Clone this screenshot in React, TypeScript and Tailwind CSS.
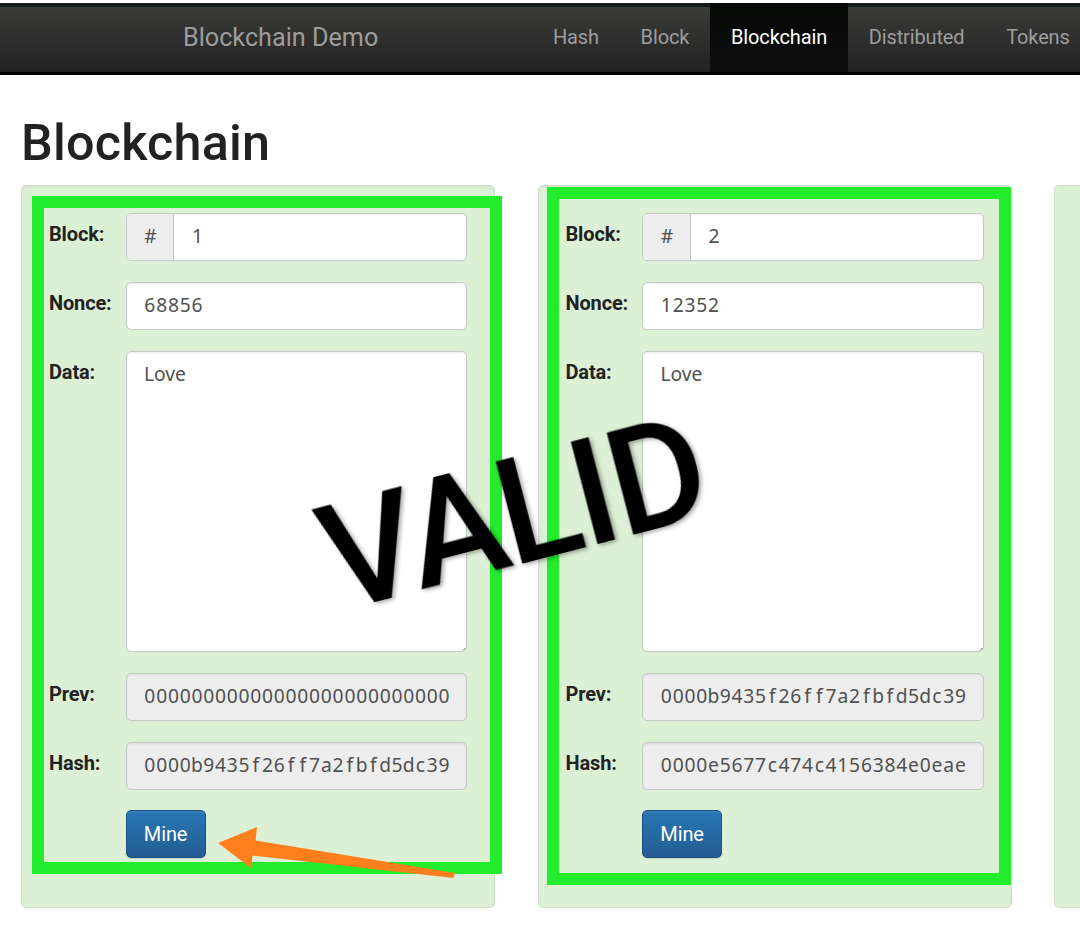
import { clsx } from 'clsx';

type BlockData = {
  number: string;
  nonce: string;
  data: string;
  prev: string;
  hash: string;
};

const navItems = ['Hash', 'Block', 'Blockchain', 'Distributed', 'Tokens'];

const blocks: BlockData[] = [
  {
    number: '1',
    nonce: '68856',
    data: 'Love',
    prev: '00000000000000000000000000',
    hash: '0000b9435f26ff7a2fbfd5dc39',
  },
  {
    number: '2',
    nonce: '12352',
    data: 'Love',
    prev: '0000b9435f26ff7a2fbfd5dc39',
    hash: '0000e5677c474c4156384e0eae',
  },
];

// Fixed pitch digits, one cell per character
function Mono({ text }: { text: string }) {
  return (
    <span className="flex overflow-hidden whitespace-nowrap">
      {text.split('').map((char, i) => (
        <span key={i} className="w-[11.77px] shrink-0 text-center">
          {char}
        </span>
      ))}
    </span>
  );
}

function Row({ label, children }: { label: string; children: React.ReactNode }) {
  return (
    <div className="flex">
      <div className="w-[76.6px] shrink-0 pt-[8px] text-[20px] leading-[27px] font-bold tracking-[-0.15px] text-[#222]">
        {label}
      </div>
      {children}
    </div>
  );
}

function Field({ text, disabled }: { text: string; disabled?: boolean }) {
  return (
    <div
      className={clsx(
        'flex h-12 min-w-0 flex-1 items-center overflow-hidden rounded-[5px] border border-[#c5cbc4] pr-[16px] pb-[2px] pl-[17.4px] font-["Noto_Sans",sans-serif] text-[19.25px] text-[#505050] shadow-[inset_0_1px_2px_rgba(0,0,0,0.08)]',
        disabled ? 'bg-[#ededed]' : 'bg-white'
      )}
    >
      <Mono text={text} />
    </div>
  );
}

function BlockCard({ block }: { block: BlockData }) {
  return (
    <div className="flex h-[723px] w-[474px] shrink-0 flex-col gap-[21px] rounded-[5px] border border-[#cfe0ca] bg-[#dcf0d6] px-[27px] pt-[27px] shadow-[inset_0_1px_3px_rgba(0,0,0,0.05)]">
      <Row label="Block:">
        <div className='flex h-12 flex-1 overflow-hidden rounded-[5px] border border-[#c5cbc4] bg-white font-["Noto_Sans",sans-serif] text-[19.25px] text-[#505050] shadow-[inset_0_1px_2px_rgba(0,0,0,0.08)]'>
          <div className="flex w-[47.6px] items-center justify-center border-r border-[#c8c8c8] bg-[#ededed] pb-[2px] pl-px">
            #
          </div>
          <div className="flex items-center pb-[2px] pl-[17.4px]">
            <Mono text={block.number} />
          </div>
        </div>
      </Row>
      <Row label="Nonce:">
        <Field text={block.nonce} />
      </Row>
      <Row label="Data:">
        <div className='relative h-[301px] flex-1 rounded-[5px] border border-[#c5cbc4] bg-white px-[17.4px] pt-[8px] font-["Noto_Sans",sans-serif] text-[19.25px] leading-[27px] text-[#505050] shadow-[inset_0_1px_2px_rgba(0,0,0,0.08)]'>
          {block.data}
          <svg className="absolute right-0 bottom-0 h-[4px] w-[4px]" viewBox="0 0 4 4">
            <path d="M1 3.5 3.5 1" stroke="#777" strokeWidth="1" />
          </svg>
        </div>
      </Row>
      <Row label="Prev:">
        <Field text={block.prev} disabled />
      </Row>
      <Row label="Hash:">
        <Field text={block.hash} disabled />
      </Row>
      <button className="-mt-px ml-[76.6px] h-12 w-20 rounded-[5px] border border-[#1c507f] bg-linear-to-b from-[#2877b4] to-[#245c93] pb-px text-[20px] tracking-[-0.1px] text-white shadow-[inset_0_1px_0_rgba(255,255,255,0.1),0_1px_1px_rgba(0,0,0,0.1)]">
        Mine
      </button>
    </div>
  );
}

function Navbar() {
  return (
    <nav className="mt-[3px] flex h-[72px] border-t-[4px] border-b-[3px] border-t-[#161d1a] border-b-black bg-linear-to-b from-[#3a3c39] to-[#222]">
      <div className="w-[532px] shrink-0 pt-[14px] pl-[183px] text-[25.2px] leading-[34px] text-[#9d9d9d]">
        Blockchain Demo
      </div>
      {navItems.map((item) => (
        <div
          key={item}
          className={clsx(
            'shrink-0 px-[20.9px] text-[20px] leading-[27px] tracking-[-0.14px]',
            item === 'Blockchain'
              ? '-mt-[4px] bg-linear-to-b from-[#060806] to-[#0e0e0e] pt-[21px] text-white'
              : 'pt-[17px] text-[#9d9d9d]'
          )}
        >
          {item}
        </div>
      ))}
    </nav>
  );
}

export default function App() {
  return (
    <div className="relative flex h-[944px] w-[1080px] flex-col overflow-hidden bg-white font-[Roboto,sans-serif]">
      <Navbar />
      <h1 className="mt-[41px] pl-[21px] text-[50.3px] leading-[54px] font-medium tracking-[0.2px] text-[#222]">
        Blockchain
      </h1>
      <div className="mt-[15px] flex gap-[42.5px] pl-[21px]">
        {blocks.map((block) => (
          <BlockCard key={block.number} block={block} />
        ))}
        <div className="h-[723px] w-[474px] shrink-0 rounded-[5px] border border-[#cfe0ca] bg-[#dcf0d6]" />
      </div>

      {/* Annotations */}
      <div className="absolute top-[196px] left-[32px] h-[678px] w-[470px] border-[12px] border-[#22ec2c]" />
      <div className="absolute top-[187px] left-[547px] h-[698px] w-[464px] border-[12px] border-[#22ec2c]" />
      <svg className="absolute inset-0 h-[944px] w-[1080px]" viewBox="0 0 1080 944">
        <path
          d="M218 843 257 827 255.5 840.5 455 873 453.5 878 252.5 855.5 251 868Z"
          fill="#ff7f1c"
        />
        <text
          transform="translate(336.8 612) rotate(-14.6)"
          className="font-[Roboto,sans-serif] text-[148px] font-medium tracking-[-3.6px] drop-shadow-[2px_2px_2px_rgba(0,0,0,0.35)]"
        >
          VALID
        </text>
      </svg>
    </div>
  );
}
